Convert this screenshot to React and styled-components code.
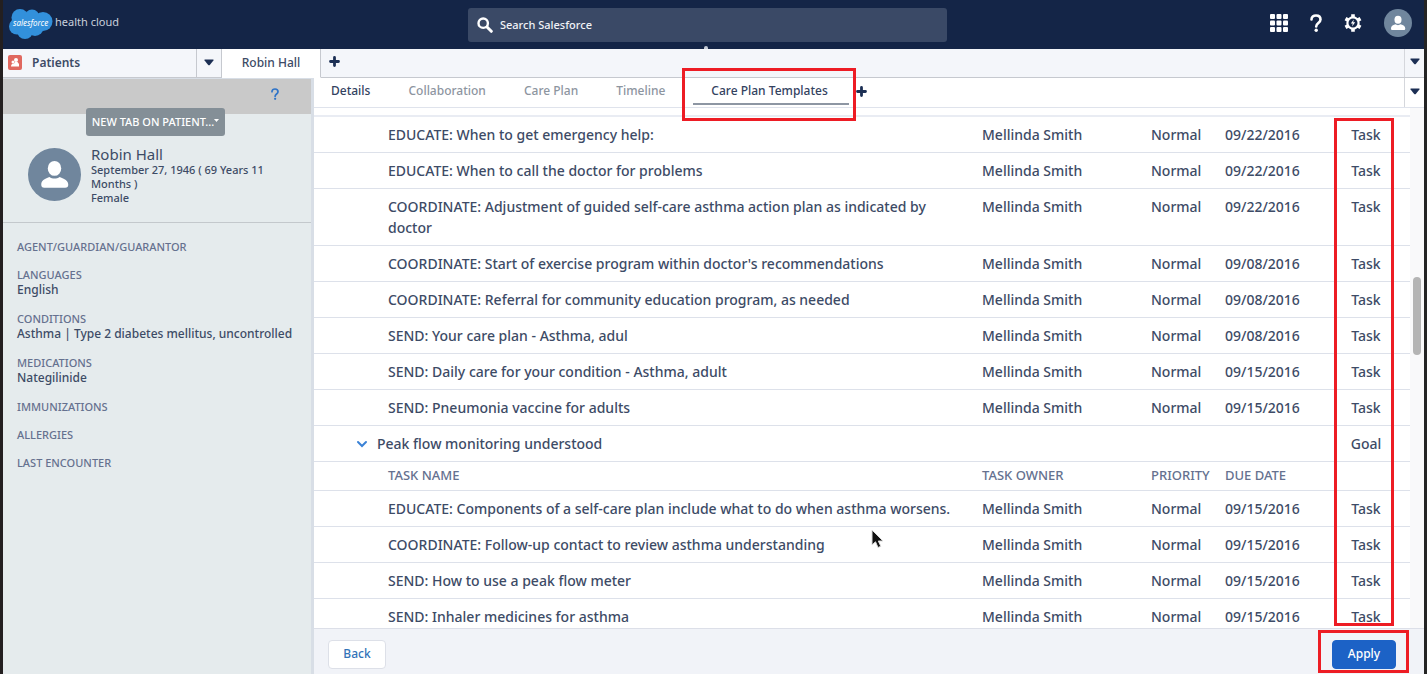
import React from "react"
import styled, { createGlobalStyle } from "styled-components"

const GlobalStyle = createGlobalStyle`
    * {
        box-sizing: border-box;
    }

    body {
        margin: 0;
        font-family: "Noto Sans", "Open Sans", sans-serif;
        font-size: 14px;
        font-weight: 500;
        color: #3d4b66;
    }

    button, input {
        font: inherit;
        color: inherit;
    }

    button {
        border: 0;
        padding: 0;
        background: none;
        cursor: pointer;
    }
`

const Window = styled.div`
    height: 100vh;
    display: flex;
    flex-direction: column;
    overflow: hidden;
    border-left: 3px solid #231f20;
    border-right: 3px solid #242424;
    background: #fff;
`

const Header = styled.header`
    position: relative;
    flex: none;
    display: grid;
    grid-template-columns: 1fr 34% 1fr;
    align-items: center;
    height: 49px;
    padding-right: 12px;
    background: #142547;
`

const Brand = styled.a`
    display: flex;
    align-items: center;
    gap: 1px;
    padding-left: 5px;
    padding-bottom: 2px;
    color: #c9d0dd;
    font-size: 11px;
    font-weight: 400;
    text-decoration: none;

    span {
        padding-bottom: 4px;
    }
`

const CloudText = styled.text`
    font-size: 8px;
    font-style: italic;
    fill: #fff;
`

const Search = styled.label`
    display: flex;
    align-items: center;
    gap: 7px;
    height: 34px;
    padding: 0 9px;
    border-radius: 3px;
    background: #3a4966;

    input {
        flex: 1;
        min-width: 0;
        border: 0;
        padding: 0;
        outline: 0;
        background: none;
        font-size: 11px;
        color: #fff;
    }

    input::placeholder {
        color: #f0f2f6;
        opacity: 1;
    }
`

const Notch = styled.span`
    position: absolute;
    bottom: 0;
    left: 50%;
    width: 4px;
    height: 3px;
    margin-left: -10px;
    border-radius: 2px 2px 0 0;
    background: #c5cbd6;
`

const Tools = styled.div`
    display: flex;
    justify-content: flex-end;
    align-items: center;
    gap: 22px;
    padding-bottom: 3px;

    button {
        display: flex;
    }
`

const TabBar = styled.nav`
    flex: none;
    display: flex;
    height: 29px;
    background: #f4f6fa;
`

const BarCell = styled.button`
    display: flex;
    align-items: center;
    justify-content: ${props => props.$align || "center"};
    gap: 10px;
    width: ${props => props.$width};
    padding: 0 5px 2px;
    border-right: 1px solid #c6c9cf;
    border-bottom: 1px solid ${props => props.$active ? "#fff" : "#c6c9cf"};
    background: ${props => props.$active ? "#fff" : "#f4f6fa"};
    font-size: 12px;
    font-weight: ${props => props.$bold ? 600 : 500};
`

const BarRest = styled.div`
    flex: 1;
    display: flex;
    justify-content: space-between;
    border-bottom: 1px solid #c6c9cf;
`

const IconCell = styled.button`
    display: flex;
    align-items: center;
    justify-content: center;
    width: ${props => props.$width || "20px"};
    padding-bottom: 3px;
    border-left: ${props => props.$divided ? "1px solid #d5d7dc" : "0"};
`

const Body = styled.div`
    flex: 1;
    min-height: 0;
    display: flex;
`

const Sidebar = styled.aside`
    flex: none;
    width: 311px;
    border-right: 3px solid #d8dee6;
    border-top: 1px solid #d8dee6;
    background: #e5ebed;
`

const Strip = styled.div`
    display: flex;
    justify-content: flex-end;
    align-items: center;
    height: 35px;
    padding: 0 32px 4px 0;
    background: #c9c9c9;
`

const Patient = styled.section`
    display: flex;
    flex-direction: column;
    height: 109px;
    border-bottom: 1px solid #c3c8cc;
`

const NewTab = styled.button`
    display: flex;
    align-items: center;
    justify-content: center;
    width: 139px;
    height: 28px;
    margin: -6px 0 0 83px;
    padding-bottom: 2px;
    border-radius: 3px;
    background: #848f97;
    color: #fff;
    font-size: 11px;
    white-space: nowrap;
`

const PatientRow = styled.div`
    display: flex;
    gap: 10px;
    padding: 9px 32px 0 25px;

    svg {
        flex: none;
        margin-top: 3px;
    }
`

const PatientInfo = styled.div`
    font-size: 11px;
    line-height: 14px;

    h1 {
        margin: 0;
        font-size: 15px;
        font-weight: 400;
        line-height: 18px;
    }

    p {
        margin: 0;
    }
`

const Facts = styled.dl`
    display: flex;
    flex-direction: column;
    gap: 14px;
    margin: 0;
    padding: 17px 14px;
    font-size: 12px;
    line-height: 16px;

    dt {
        font-size: 11px;
        line-height: 14px;
        color: #65718f;
    }

    dd {
        margin: 0;
    }
`

const Main = styled.main`
    flex: 1;
    min-width: 0;
    display: flex;
    flex-direction: column;
`

const SubTabs = styled.nav`
    flex: none;
    display: flex;
    height: 30px;
    padding-left: 7px;
    border-bottom: 1px solid #dfe3ec;
`

const SubTab = styled.button`
    position: relative;
    height: 27px;
    margin-right: ${props => props.$active ? "7px" : "18px"};
    padding: ${props => props.$active ? "0 21px 0 18px" : "0 10px"};
    border-bottom: 2px solid ${props => props.$active ? "#8d96a3" : "transparent"};
    color: ${props => props.$muted ? "#8d959f" : "#33425f"};
    font-size: 12px;
    white-space: nowrap;
`

const Spacer = styled.div`
    flex: 1;
`

const Marker = styled.span`
    position: absolute;
    z-index: 2;
    border: 3px solid #ed1c24;
    pointer-events: none;
`

const TabMarker = styled(Marker)`
    inset: -10px -7px -18px -11px;
`

const TypeMarker = styled(Marker)`
    top: 10px;
    right: 30px;
    bottom: 2px;
    width: 60px;
`

const ApplyMarker = styled(Marker)`
    inset: -11px -14px -5px -15px;
`

const Content = styled.div`
    position: relative;
    flex: 1;
    min-height: 0;
    display: flex;
`

const Scroller = styled.div`
    flex: 1;
    min-width: 0;
    padding-top: 7px;
    overflow: hidden;
`

const Track = styled.div`
    flex: none;
    width: 14px;
    padding: 0 3px;
    background: #f9f9fa;
`

const Thumb = styled.div`
    width: 8px;
    height: 15%;
    margin-top: 169px;
    border-radius: 4px;
    background: #b4b4b4;
`

const Tasks = styled.table`
    width: 100%;
    table-layout: fixed;
    border-collapse: separate;
    border-spacing: 0;
    border-top: 2px solid #e9ecf3;

    td, th {
        padding: 7px 0;
        border-bottom: 1px solid #dde1ea;
        line-height: 21px;
        text-align: left;
        vertical-align: top;
    }

    th {
        padding: 3px 0 4px;
        color: #65718f;
        font-size: 13px;
        font-weight: 500;
    }

    td:first-child, th:first-child {
        padding-left: 74px;
        padding-right: 24px;
    }

    td:last-child {
        text-align: center;
    }
`

const Column = styled.col`
    width: ${props => props.$width};
`

const GoalRow = styled.tr`
    && td:first-child {
        padding-left: 42px;
    }

    button {
        display: flex;
        align-items: center;
        gap: 9px;
        line-height: 21px;
    }
`

const Footer = styled.footer`
    flex: none;
    display: flex;
    justify-content: space-between;
    height: 46px;
    padding: 11px 28px 5px 14px;
    border-top: 1px solid #dcdfe8;
    background: #f1f3f8;
`

const Action = styled.button`
    position: relative;
    width: ${props => props.$primary ? "64px" : "58px"};
    height: 29px;
    padding-bottom: 2px;
    border: 1px solid ${props => props.$primary ? "#1c62c6" : "#dde0e8"};
    border-radius: 4px;
    background: ${props => props.$primary ? "#1c62c6" : "#fff"};
    color: ${props => props.$primary ? "#fff" : "#3273b8"};
    font-size: 12px;
`

const Cursor = styled.svg`
    position: absolute;
    top: 421px;
    left: 557px;
`

const tasksBefore = [
    ["EDUCATE: When to get emergency help:", "09/22/2016"],
    ["EDUCATE: When to call the doctor for problems", "09/22/2016"],
    ["COORDINATE: Adjustment of guided self-care asthma action plan as indicated by doctor", "09/22/2016"],
    ["COORDINATE: Start of exercise program within doctor's recommendations", "09/08/2016"],
    ["COORDINATE: Referral for community education program, as needed", "09/08/2016"],
    ["SEND: Your care plan - Asthma, adul", "09/08/2016"],
    ["SEND: Daily care for your condition - Asthma, adult", "09/15/2016"],
    ["SEND: Pneumonia vaccine for adults", "09/15/2016"],
]

const tasksAfter = [
    ["EDUCATE: Components of a self-care plan include what to do when asthma worsens.", "09/15/2016"],
    ["COORDINATE: Follow-up contact to review asthma understanding", "09/15/2016"],
    ["SEND: How to use a peak flow meter", "09/15/2016"],
    ["SEND: Inhaler medicines for asthma", "09/15/2016"],
]

const facts = [
    ["AGENT/GUARDIAN/GUARANTOR"],
    ["LANGUAGES", "English"],
    ["CONDITIONS", "Asthma | Type 2 diabetes mellitus, uncontrolled"],
    ["MEDICATIONS", "Nategilinide"],
    ["IMMUNIZATIONS"],
    ["ALLERGIES"],
    ["LAST ENCOUNTER"],
]

const TaskRow = ({ task }) => (
    <tr>
        <td>{task[0]}</td>
        <td>Mellinda Smith</td>
        <td>Normal</td>
        <td>{task[1]}</td>
        <td>Task</td>
    </tr>
)

const Avatar = ({ size }) => (
    <svg width={size} height={size} viewBox="0 0 52 52" aria-hidden="true">
        <circle cx="26" cy="26" r="26" fill="#70869d" />
        <ellipse cx="26" cy="20" rx="6.6" ry="7.3" fill="#fff" />
        <path d="M13 36c0-4 3-5.500 8-7.500 3 2 7 2 10 0 5 2 8.500 3.500 8.500 7.500 0 2-1 3-3 3h-20.500c-2 0-3-1-3-3z" fill="#fff" />
    </svg>
)

const Caret = () => (
    <svg width="10" height="7" viewBox="0 0 10 7" aria-hidden="true">
        <path d="M1 .5h8q1 0 .4 1L6 5.800q-1 1-2 0L.6 1.500Q0 .5 1 .5z" fill="#1c2f54" />
    </svg>
)

const Plus = () => (
    <svg width="11" height="11" viewBox="0 0 11 11" aria-hidden="true">
        <path d="M5.500 1.500v8M1.500 5.500h8" stroke="#1c2f54" strokeWidth="2.800" strokeLinecap="round" />
    </svg>
)

const Question = ({ color, size }) => (
    <svg width={size * 2 / 3} height={size} viewBox="0 0 12 18" aria-hidden="true">
        <path d="M1.500 5.500C1.500 3 3.400 1.500 6 1.500s4.500 1.500 4.500 4c0 3.500-4.300 3.500-4.300 7" fill="none" stroke={color} strokeWidth="2.600" strokeLinecap="round" />
        <circle cx="6.200" cy="16.200" r="1.700" fill={color} />
    </svg>
)

const Cloud = () => (
    <svg width="46" height="32" viewBox="0 0 46 32" aria-hidden="true">
        <g fill="#3290db">
            <circle cx="12" cy="9.500" r="8.500" />
            <circle cx="24" cy="9" r="7.500" />
            <circle cx="35" cy="13.500" r="9.500" />
            <circle cx="9" cy="18.500" r="8" />
            <circle cx="17" cy="23" r="8" />
            <circle cx="27" cy="19.500" r="8.500" />
        </g>
        <CloudText x="5" y="18">salesforce</CloudText>
    </svg>
)

const Gear = () => (
    <svg width="18" height="18" viewBox="0 0 18 18" aria-hidden="true">
        <g fill="none" stroke="#fff">
            <circle cx="9" cy="9" r="5.600" strokeWidth="2.200" />
            <path d="M9 .3v3M9 14.700v3M1.500 4.600l2.600 1.500M13.900 11.900l2.600 1.500M1.500 13.400l2.600-1.500M13.900 6.100l2.600-1.500" strokeWidth="3.600" />
        </g>
        <path d="M9.800 5.500L6.800 9.500h1.900l-.6 3 3.100-4.200H9.200z" fill="#fff" />
    </svg>
)

export default function App() {
    return (
        <Window>
            <GlobalStyle />
            <Header>
                <Brand href="#">
                    <Cloud />
                    <span>health cloud</span>
                </Brand>
                <Search>
                    <svg width="16" height="16" viewBox="0 0 16 16" aria-hidden="true">
                        <circle cx="6.200" cy="6.200" r="4.700" fill="none" stroke="#fff" strokeWidth="2.400" />
                        <path d="M10 10l4.300 4.300" stroke="#fff" strokeWidth="3" strokeLinecap="round" />
                    </svg>
                    <input type="search" aria-label="Search Salesforce" placeholder="Search Salesforce" />
                </Search>
                <Tools>
                    <button aria-label="App launcher">
                        <svg width="18" height="18" viewBox="0 0 18 18" aria-hidden="true">
                            {[0, 6.500, 13].map(y => [0, 6.500, 13].map(x => (
                                <rect key={x + "-" + y} x={x} y={y} width="5" height="5" rx="1" fill="#fff" />
                            )))}
                        </svg>
                    </button>
                    <button aria-label="Help"><Question color="#fff" size={18} /></button>
                    <button aria-label="Setup"><Gear /></button>
                    <button aria-label="Profile"><Avatar size={28} /></button>
                </Tools>
                <Notch />
            </Header>
            <TabBar>
                <BarCell $width="194px" $align="flex-start" $bold>
                    <svg width="14" height="15" viewBox="0 0 14 15" aria-hidden="true">
                        <rect width="14" height="15" rx="2" fill="#e0685f" />
                        <circle cx="8" cy="5" r="2" fill="#fff" />
                        <circle cx="5" cy="7" r="1.500" fill="#fff" />
                        <path d="M3 11.500c0-2 1-3 3-3l1-1.500h2.500l1.500 2v2.500z" fill="#fff" />
                    </svg>
                    Patients
                </BarCell>
                <BarCell $width="25px" aria-label="Patients menu"><Caret /></BarCell>
                <BarCell $width="99px" $active>Robin Hall</BarCell>
                <BarRest>
                    <IconCell $width="27px" aria-label="Open tab"><Plus /></IconCell>
                    <IconCell $divided aria-label="More tabs"><Caret /></IconCell>
                </BarRest>
            </TabBar>
            <Body>
                <Sidebar>
                    <Strip>
                        <button aria-label="Help for this page"><Question color="#2f74c8" size={12} /></button>
                    </Strip>
                    <Patient>
                        <NewTab>
                            NEW TAB ON PATIENT...
                            <svg width="5" height="4" viewBox="0 0 5 4" aria-hidden="true"><path d="M0 0h5L2.500 3z" fill="#fff" /></svg>
                        </NewTab>
                        <PatientRow>
                            <Avatar size={53} />
                            <PatientInfo>
                                <h1>Robin Hall</h1>
                                <p>September 27, 1946 ( 69 Years 11 Months )</p>
                                <p>Female</p>
                            </PatientInfo>
                        </PatientRow>
                    </Patient>
                    <Facts>
                        {facts.map(([label, value]) => (
                            <div key={label}>
                                <dt>{label}</dt>
                                {value && <dd>{value}</dd>}
                            </div>
                        ))}
                    </Facts>
                </Sidebar>
                <Main>
                    <SubTabs>
                        <SubTab>Details</SubTab>
                        <SubTab $muted>Collaboration</SubTab>
                        <SubTab $muted>Care Plan</SubTab>
                        <SubTab $muted>Timeline</SubTab>
                        <SubTab $active>
                            Care Plan Templates
                            <TabMarker />
                        </SubTab>
                        <IconCell $width="11px" aria-label="Add tab"><Plus /></IconCell>
                        <Spacer />
                        <IconCell $divided aria-label="More sections"><Caret /></IconCell>
                    </SubTabs>
                    <Content>
                        <Scroller>
                            <Tasks>
                                <colgroup>
                                    <Column />
                                    <Column $width="169px" />
                                    <Column $width="74px" />
                                    <Column $width="97px" />
                                    <Column $width="88px" />
                                </colgroup>
                                <tbody>
                                    {tasksBefore.map(task => <TaskRow key={task[0]} task={task} />)}
                                    <GoalRow>
                                        <td colSpan={4}>
                                            <button aria-expanded="true">
                                                <svg width="12" height="8" viewBox="0 0 12 8" aria-hidden="true">
                                                    <path d="M2 2l4 4 4-4" fill="none" stroke="#3b82d6" strokeWidth="2" strokeLinecap="round" />
                                                </svg>
                                                Peak flow monitoring understood
                                            </button>
                                        </td>
                                        <td>Goal</td>
                                    </GoalRow>
                                    <tr>
                                        <th scope="col">TASK NAME</th>
                                        <th scope="col">TASK OWNER</th>
                                        <th scope="col">PRIORITY</th>
                                        <th scope="col">DUE DATE</th>
                                        <th />
                                    </tr>
                                    {tasksAfter.map(task => <TaskRow key={task[0]} task={task} />)}
                                </tbody>
                            </Tasks>
                        </Scroller>
                        <Track><Thumb /></Track>
                        <TypeMarker />
                        <Cursor width="14" height="20" viewBox="0 0 14 20" aria-hidden="true">
                            <path d="M1 1v15l3.500-3.200L7 18.500l2.800-1.200-2.500-5.300H12z" fill="#111" stroke="#ddd" strokeWidth="1" />
                        </Cursor>
                    </Content>
                    <Footer>
                        <Action>Back</Action>
                        <Action $primary>
                            Apply
                            <ApplyMarker />
                        </Action>
                    </Footer>
                </Main>
            </Body>
        </Window>
    )
}
